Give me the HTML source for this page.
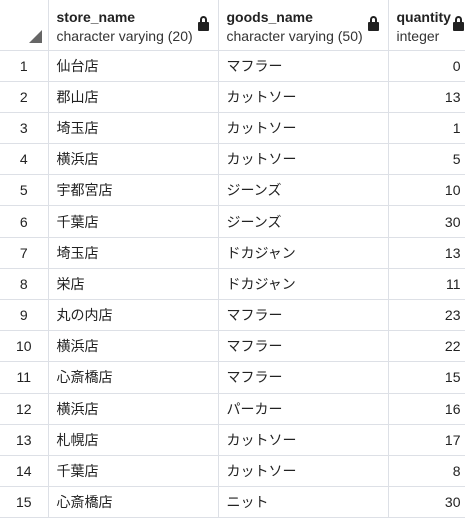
<!DOCTYPE html>
<html><head><style>
body{margin:0;width:465px;height:518px;overflow:hidden;background:#fff;font-family:"Liberation Sans","Noto Sans CJK JP",sans-serif;color:#222;}
table{border-collapse:collapse;table-layout:fixed;width:466px;position:absolute;left:0;top:0}
td,th{border:1px solid #dde0e6;padding:0 8px;font-size:14px;font-weight:normal;white-space:nowrap;overflow:hidden;text-align:left;box-sizing:border-box}
th{height:50px;vertical-align:top;position:relative;border-top:none}
tr.r{height:31.2px}
td:first-child{text-align:center;padding:0;border-left:none}
th:first-child{border-left:none}
td.n{text-align:right;padding-right:5px}
.h1{display:block;font-weight:bold;margin-top:9px;font-size:14px;color:#222}
.h2{display:block;margin-top:3px;color:#333}
.lk{position:absolute;right:6px;top:22px;width:11px;height:9px;background:#222;border-radius:1px}
.lk:before{content:"";position:absolute;left:2px;top:-6px;width:3px;height:5px;border:2px solid #222;border-bottom:none;border-radius:4px 4px 0 0}
.tri{position:absolute;right:6px;bottom:7px;width:0;height:0;border-left:13px solid transparent;border-bottom:13px solid #666}
</style></head><body>
<table>
<colgroup><col style="width:48px"><col style="width:170px"><col style="width:170px"><col style="width:78px"></colgroup>
<tr><th><span class="tri"></span></th>
<th><span class="h1">store_name</span><span class="h2">character varying (20)</span><span class="lk" style="right:9px"></span></th>
<th><span class="h1">goods_name</span><span class="h2">character varying (50)</span><span class="lk" style="right:9px"></span></th>
<th><span class="h1">quantity</span><span class="h2">integer</span><span class="lk" style="right:2px"></span></th></tr>
<tr class="r"><td>1</td><td>仙台店</td><td>マフラー</td><td class="n">0</td></tr>
<tr class="r"><td>2</td><td>郡山店</td><td>カットソー</td><td class="n">13</td></tr>
<tr class="r"><td>3</td><td>埼玉店</td><td>カットソー</td><td class="n">1</td></tr>
<tr class="r"><td>4</td><td>横浜店</td><td>カットソー</td><td class="n">5</td></tr>
<tr class="r"><td>5</td><td>宇都宮店</td><td>ジーンズ</td><td class="n">10</td></tr>
<tr class="r"><td>6</td><td>千葉店</td><td>ジーンズ</td><td class="n">30</td></tr>
<tr class="r"><td>7</td><td>埼玉店</td><td>ドカジャン</td><td class="n">13</td></tr>
<tr class="r"><td>8</td><td>栄店</td><td>ドカジャン</td><td class="n">11</td></tr>
<tr class="r"><td>9</td><td>丸の内店</td><td>マフラー</td><td class="n">23</td></tr>
<tr class="r"><td>10</td><td>横浜店</td><td>マフラー</td><td class="n">22</td></tr>
<tr class="r"><td>11</td><td>心斎橋店</td><td>マフラー</td><td class="n">15</td></tr>
<tr class="r"><td>12</td><td>横浜店</td><td>パーカー</td><td class="n">16</td></tr>
<tr class="r"><td>13</td><td>札幌店</td><td>カットソー</td><td class="n">17</td></tr>
<tr class="r"><td>14</td><td>千葉店</td><td>カットソー</td><td class="n">8</td></tr>
<tr class="r"><td>15</td><td>心斎橋店</td><td>ニット</td><td class="n">30</td></tr>
</table>
</body></html>
